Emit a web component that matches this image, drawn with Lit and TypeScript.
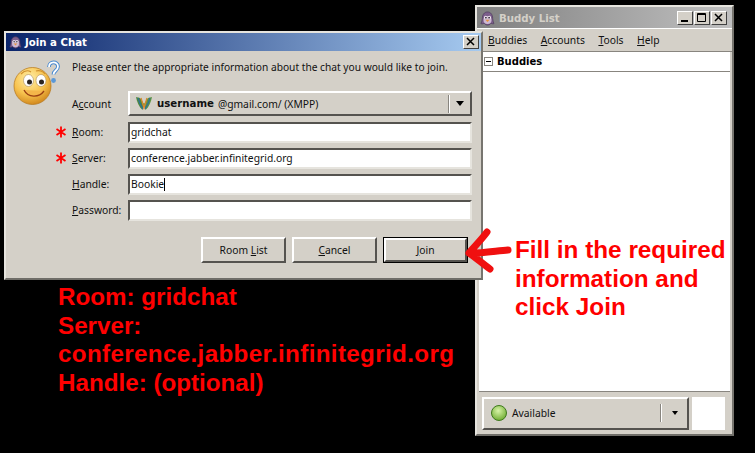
import { LitElement, html, css } from "lit";
import { customElement } from "lit/decorators.js";

const pidgin = (s: number) => html`<svg width=${s} height=${s} viewBox="0 0 16 16">
  <path d="M8 1C4.500 1 2.500 4 2.500 8c0 2-1 4-1.500 5.500 1.500.5 2.500 0 3.500-.5 1 1.500 2.500 2 3.500 2s2.800-.5 3.800-2c1 .5 2 1 3 .500C14.500 12 13.500 10 13.500 8 13.500 4 11.500 1 8 1z" fill="#7d5f8c" stroke="#4a3558" stroke-width=".7"/>
  <ellipse cx="8" cy="9.500" rx="4.300" ry="4.300" fill="#cdb8d2"/>
  <circle cx="6" cy="6.800" r="1.700" fill="#f4eef4"/><circle cx="10" cy="6.800" r="1.700" fill="#f4eef4"/>
  <circle cx="6.300" cy="7.100" r=".9" fill="#2a1e30"/><circle cx="9.700" cy="7.100" r=".9" fill="#2a1e30"/>
  <path d="M5.800 9.300h4.400L8 11.800z" fill="#e8923a"/>
</svg>`;

const star = html`<svg class="stari" width="10" height="12" viewBox="0 0 10 12"><path d="M5 .5v11M.5 3l9 6M9.500 3l-9 6" fill="none" stroke="#f00" stroke-width="1.800"/></svg>`;

const field = (req: boolean, u: string, rest: string, value: string, caret = false) => html`
  <div class="row">
    <span class="star">${req ? star : ""}</span>
    <label class="lbl"><u>${u}</u>${rest}</label>
    <div class="input">${value}${caret ? html`<i class="caret"></i>` : ""}</div>
  </div>`;

@customElement("app-root")
export class AppRoot extends LitElement {
  static styles = css`
    :host { display: block; width: 755px; height: 453px; background: #000; position: relative; overflow: hidden;
      font-family: "Noto Sans", "DejaVu Sans", sans-serif; font-size: 10.3px; color: #111; }
    u { text-decoration: underline; text-underline-offset: 1px; }
    .win { position: absolute; background: #d4d0c8; box-sizing: border-box; display: flex; flex-direction: column;
      border: 2px solid; border-color: #e6e4de #77756f #6f6d68 #e6e4de; }
    .buddy { left: 475px; top: 5px; width: 259px; height: 431px; }
    .dialog { left: 4px; top: 31px; width: 479px; height: 249px; }
    .title { flex: none; display: flex; align-items: center; gap: 3px; padding: 0 2px 0 3px;
      font-weight: 700; font-size: 10.200px; font-family: "DejaVu Sans", sans-serif; }
    .dialog .title { background: linear-gradient(90deg, #0a246a, #a6caf0); color: #fff; height: 18px; }
    .buddy .title { background: linear-gradient(90deg, #808080, #c0c0c0); color: #d4d0c8; height: 21px; padding-right: 5px; padding-top: 1px; box-sizing: border-box; gap: 4px; }
    .sp { flex: 1; }
    .tb { width: 16px; height: 14px; box-sizing: border-box; background: #d4d0c8; border: 1px solid; border-color: #fff #404040 #404040 #fff;
      display: flex; align-items: center; justify-content: center; }
    .tbs { display: flex; gap: 1px; }
    .body { flex: 1; display: flex; flex-direction: column; }
    .prompt { display: flex; padding: 4px 0 0 2px; height: 39px; box-sizing: border-box; }
    .smiley { width: 56px; height: 56px; margin-right: 8px; flex: none; }
    .prompt p { margin: 0; padding-top: 5px; line-height: 15px; white-space: nowrap; font-size: 10.200px; }
    .form { display: flex; flex-direction: column; }
    .row { display: flex; align-items: center; height: 26px; }
    .row.acct { height: 27px; margin-bottom: 2px; }
    .star { width: 66px; box-sizing: border-box; padding-left: 50px; display: flex; align-items: center; height: 24px; }
    .lbl { width: 56px; white-space: nowrap; }
    .input { width: 344px; height: 21px; box-sizing: border-box; background: #fff; border: 2px solid; border-color: #55534f #e6e4de #e6e4de #55534f;
      padding: 0 1px; white-space: nowrap; display: flex; align-items: center; }
    .caret { width: 1px; height: 13px; background: #000; }
    .combo { width: 344px; height: 25px; box-sizing: border-box; border: 2px solid; border-color: #fff #55534f #55534f #fff; display: flex; align-items: center; padding-left: 6px; }
    .combo b { font-family: "DejaVu Sans", sans-serif; font-size: 10.200px; margin: 0 4px 0 5px; }
    .split { width: 1px; height: 18px; background: #88857f; border-right: 1px solid #fff; flex: none; }
    .arrow { width: 0; height: 0; border: 4.500px solid transparent; border-top: 5px solid #000; border-bottom: 0; }
    .arrow.small { border-width: 4px 3.500px 0; border-top-color: #000; }
    .comboArrow { width: 20px; display: flex; justify-content: center; flex: none; }
    .stBtn .comboArrow { width: 25px; }
    .actions { display: flex; justify-content: flex-end; gap: 6px; padding: 0 13px 0 0; margin-top: 14px; }
    .btn { width: 85px; height: 26px; box-sizing: border-box; border: 2px solid; border-color: #fff #55534f #55534f #fff;
      display: flex; align-items: center; justify-content: center; }
    .btn.def { outline: 1px solid #000; width: 83px; height: 24px; margin: 1px; }
    .menu { display: flex; gap: 13.600px; height: 24px; align-items: center; padding-left: 11px; border-top: 1px solid #fff; border-bottom: 1px solid #88857f; flex: none; box-sizing: border-box; }
    .listwrap { flex: 1; background: #fff; margin: 0 2px; border-bottom: 1px solid #88857f; display: flex; flex-direction: column; }
    .group { height: 19px; display: flex; align-items: center; gap: 4px; padding-left: 5px; border-bottom: 1px solid #88857f; flex: none; font-weight: 700; font-family: "DejaVu Sans", sans-serif; font-size: 10px; color: #000; }
    .minus { width: 7px; height: 7px; border: 1px solid #88857f; position: relative; }
    .minus::after { content: ""; position: absolute; left: 1px; right: 1px; top: 3px; height: 1px; background: #000; }
    .status { height: 42px; flex: none; display: flex; align-items: center; padding: 0 7px 0 5px; gap: 3px; }
    .stBtn { flex: 1; height: 33px; box-sizing: border-box; border: 2px solid; border-color: #fff #55534f #55534f #fff; display: flex; align-items: center; padding-left: 6px; }
    .stBtn svg { margin-right: 4px; }
    .icon { width: 33px; height: 33px; background: #fff; flex: none; }
    .note { position: absolute; color: #f00; font-family: "Liberation Sans", sans-serif; font-weight: 700; white-space: nowrap; }
    .n1 { left: 515px; top: 236px; font-size: 24.300px; line-height: 28.500px; }
    .n2 { left: 58px; top: 283px; font-size: 24.200px; line-height: 28.500px; }
    .wide { letter-spacing: .35px; }
    .bigarrow { position: absolute; left: 460px; top: 222px; }
  `;

  render() {
    return html`
      <section class="win buddy">
        <div class="title">${pidgin(15)}<span>Buddy List</span><span class="sp"></span>
          <div class="tbs">
            <div class="tb"><svg width="10" height="10"><path d="M1 7h7v2H1z" fill="#000"/></svg></div>
            <div class="tb"><svg width="10" height="10"><path d="M.5.500h8v8h-8zM.5 1.500h8" fill="none" stroke="#000"/></svg></div>
            <div class="tb"><svg width="10" height="10"><path d="M1 1l7 7M8 1L1 8" fill="none" stroke="#000" stroke-width="1.500"/></svg></div>
          </div>
        </div>
        <nav class="menu"><span><u>B</u>uddies</span><span><u>A</u>ccounts</span><span><u>T</u>ools</span><span><u>H</u>elp</span></nav>
        <div class="listwrap">
          <div class="group"><span class="minus"></span>Buddies</div>
        </div>
        <div class="status">
          <div class="stBtn">
            <svg width="18" height="18" viewBox="0 0 18 18"><defs><radialGradient id="g" cx=".45" cy=".35" r=".7"><stop offset="0" stop-color="#d8f4a8"/><stop offset="1" stop-color="#6aa82c"/></radialGradient></defs><circle cx="9" cy="9" r="7.500" fill="url(#g)" stroke="#3f7a1e"/></svg>
            <span>Available</span><span class="sp"></span><span class="split"></span>
            <span class="comboArrow"><span class="arrow small"></span></span>
          </div>
          <div class="icon"></div>
        </div>
      </section>

      <section class="win dialog">
        <div class="title">${pidgin(13)}<span>Join a Chat</span><span class="sp"></span>
          <div class="tb"><svg width="10" height="10"><path d="M1 1l7 7M8 1L1 8" fill="none" stroke="#000" stroke-width="1.500"/></svg></div>
        </div>
        <div class="body">
          <div class="prompt">
            <svg class="smiley" viewBox="0 0 56 56">
              <defs><radialGradient id="s" cx=".42" cy=".3" r=".78"><stop offset="0" stop-color="#fff0a8"/><stop offset=".55" stop-color="#f7c24e"/><stop offset="1" stop-color="#c87a12"/></radialGradient></defs>
              <circle cx="24.500" cy="31" r="18.500" fill="url(#s)" stroke="#b57416" stroke-width=".7"/>
              <ellipse cx="20.500" cy="25.500" rx="5" ry="6" fill="#fff" stroke="#a98a55" stroke-width=".6"/>
              <ellipse cx="33" cy="25.500" rx="5" ry="6" fill="#fff" stroke="#a98a55" stroke-width=".6"/>
              <circle cx="21.500" cy="27" r="2.500" fill="#2a2420"/><circle cx="33.500" cy="27" r="2.500" fill="#2a2420"/>
              <path d="M16 35c4 8 15 8 20 1" fill="#f4b64a" stroke="#9a3f12" stroke-width="1.300"/>
              <path d="M13 19c3-3 7-4 10-2M28 16c3-1 7 0 9 3" fill="none" stroke="#cf8f2c" stroke-width="1.100"/>
              <path d="M41 12c0-6 9-6 9-.5 0 4-4.500 4-4.500 8" fill="none" stroke="#4a8ad0" stroke-width="3.800"/>
              <circle cx="45.500" cy="25.500" r="2.400" fill="#5a98d8"/>
              <path d="M41 12c0-6 9-6 9-.5 0 4-4.500 4-4.500 8" fill="none" stroke="#fff" stroke-width="1.800"/>
            </svg>
            <p>Please enter the appropriate information about the chat you would like to join.</p>
          </div>
          <div class="form">
            <div class="row acct">
              <span class="star"></span>
              <label class="lbl">A<u>c</u>count</label>
              <div class="combo">
                <svg width="16" height="15" viewBox="0 0 16 15">
                  <path d="M0 1c1 5 3 10 6.500 13L8 8 4 2z" fill="#4f8a3c"/>
                  <path d="M16 1c-1 5-3 10-6.500 13L8 8l4-6z" fill="#5c9440"/>
                  <path d="M2 2c1 4 3 8 5 11M14 2c-1 4-3 8-5 11" fill="none" stroke="#2f6f9a" stroke-width="1.200"/>
                  <path d="M5 2l3 10 3-10" fill="none" stroke="#d9862a" stroke-width="1.300"/>
                </svg>
                <b>username</b><span>@gmail.com/ (XMPP)</span><span class="sp"></span><span class="split"></span>
                <span class="comboArrow"><span class="arrow"></span></span>
              </div>
            </div>
            ${field(true, "R", "oom:", "gridchat")}
            ${field(true, "S", "erver:", "conference.jabber.infinitegrid.org")}
            ${field(false, "H", "andle:", "Bookie", true)}
            ${field(false, "P", "assword:", "")}
          </div>
          <div class="actions">
            <div class="btn"><span>Room <u>L</u>ist</span></div>
            <div class="btn"><span><u>C</u>ancel</span></div>
            <div class="btn def"><span><u>J</u>oin</span></div>
          </div>
        </div>
      </section>

      <svg class="bigarrow" width="60" height="52" viewBox="0 0 60 52"><path d="M27 10C22 17 14 25 9 31c7 1 27-2 39-3M9 31c6 4 14 11 21 16" fill="none" stroke="#f01010" stroke-width="7" stroke-linecap="round" stroke-linejoin="round"/></svg>
      <div class="note n1">Fill in the required<br>information and<br>click Join</div>
      <div class="note n2">Room: gridchat<br>Server:<br><span class="wide">conference.jabber.infinitegrid.org</span><br>Handle: (optional)</div>
    `;
  }
}
